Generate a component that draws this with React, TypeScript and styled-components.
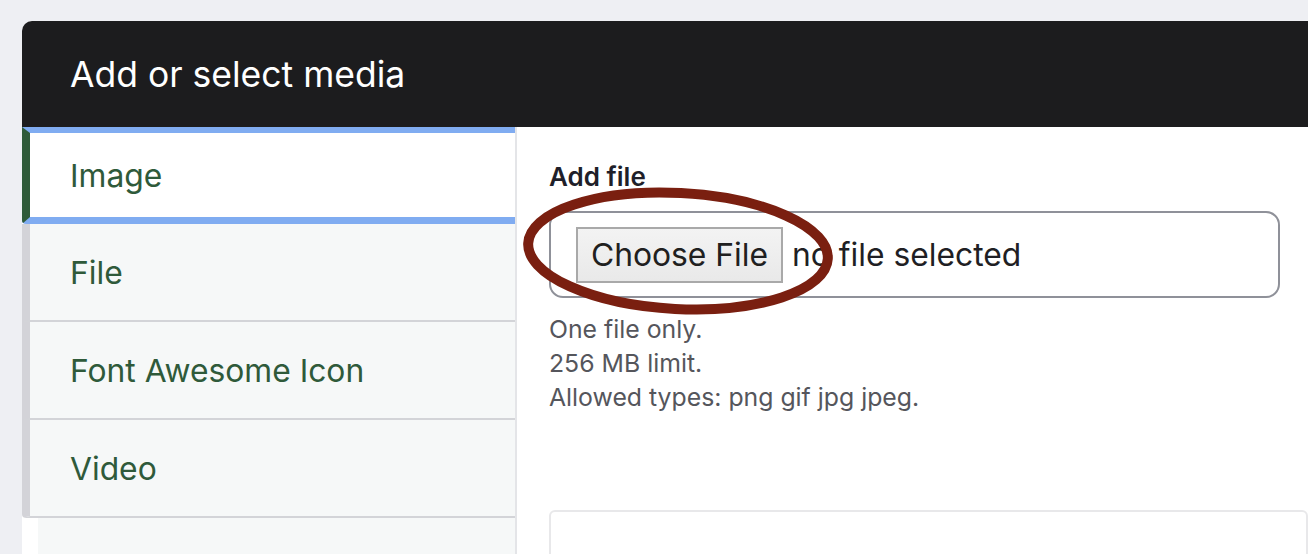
import styled, { createGlobalStyle } from 'styled-components';

const GlobalStyle = createGlobalStyle`
  html, body {
    margin: 0;
    padding: 0;
    background: #eeeff3;
    font-family: Inter, "Noto Sans", sans-serif;
    overflow: hidden;
  }
`;

const Page = styled.div`
  padding: 21px 0 0 22px;
  height: 554px;
  box-sizing: border-box;
`;

const Dialog = styled.div`
  background: #ffffff;
  border-top-left-radius: 10px;
  overflow: hidden;
  height: 100%;
`;

const Header = styled.div`
  height: 106px;
  background: #1c1c1e;
  display: flex;
  align-items: center;
  padding-left: 48px;
`;

const Title = styled.h1`
  margin: 0;
  color: #ffffff;
  font-size: 35.5px;
  font-weight: 400;
`;

const Body = styled.div`
  display: flex;
  height: 100%;
`;

const Sidebar = styled.div`
  width: 493px;
  flex: none;
  display: flex;
  flex-direction: column;
  border-right: 2px solid #e4e5e8;
`;

const TabList = styled.div`
  display: flex;
  flex-direction: column;
`;

const Tab = styled.div<{ $active?: boolean }>`
  display: flex;
  align-items: center;
  box-sizing: border-box;
  padding-left: 40px;
  font-size: 31.8px;
  color: #2f5a3a;
  border-left: 8px solid ${(p) => (p.$active ? '#2f5b39' : '#d3d3d8')};
  background: ${(p) => (p.$active ? '#ffffff' : '#f6f8f8')};
  height: ${(p) => (p.$active ? '97px' : '98px')};
  border-top: ${(p) => (p.$active ? '6px solid #80acf1' : 'none')};
  border-bottom: ${(p) => (p.$active ? '7px solid #80acf1' : '2px solid #d3d4d8')};
  border-bottom-left-radius: ${(p) => (p.$active ? '4px' : '0')};

  &:last-child {
    border-bottom-left-radius: 4px;
  }
`;

const SidebarRest = styled.div`
  flex: 1;
  margin-left: 16px;
  background: #f6f8f8;
`;

const Content = styled.div`
  flex: 1;
  padding: 34px 0 0 32px;
`;

const Label = styled.div`
  font-size: 26px;
  font-weight: 600;
  color: #1f1f2a;
  margin-bottom: 19px;
`;

const FileField = styled.div`
  position: relative;
  width: 731px;
  height: 87px;
  box-sizing: border-box;
  border: 2px solid #8f9199;
  border-radius: 14px;
  display: flex;
  align-items: center;
  padding-left: 25px;
  gap: 9px;
  font-size: 31.8px;
  color: #1f1f24;
`;

const ChooseButton = styled.span`
  display: inline-flex;
  align-items: center;
  justify-content: center;
  width: 207px;
  height: 56px;
  box-sizing: border-box;
  border: 2px solid #a9a9a9;
  background: linear-gradient(#f3f3f3, #e9e9e9);
  color: #202020;
`;

const Circle = styled.svg`
  position: absolute;
  left: -36px;
  top: -36px;
  pointer-events: none;
`;

const Help = styled.div`
  margin-top: 14px;
  font-size: 24.8px;
  line-height: 34px;
  color: #55565c;
`;

const Preview = styled.div`
  margin-top: 96px;
  height: 80px;
  border: 2px solid #e8e8ea;
  border-radius: 6px;
`;

const tabs = ['Image', 'File', 'Font Awesome Icon', 'Video'];

export default function App() {
  return (
    <>
      <GlobalStyle />
      <Page>
        <Dialog>
          <Header>
            <Title>Add or select media</Title>
          </Header>
          <Body>
            <Sidebar>
              <TabList>
                {tabs.map((t, i) => (
                  <Tab key={t} $active={i === 0}>
                    {t}
                  </Tab>
                ))}
              </TabList>
              <SidebarRest />
            </Sidebar>
            <Content>
              <Label>Add file</Label>
              <FileField>
                <ChooseButton>Choose File</ChooseButton>
                <span>no file selected</span>
                <Circle width="330" height="150" viewBox="0 0 330 150">
                  <ellipse
                    cx="163"
                    cy="74"
                    rx="150"
                    ry="58"
                    fill="none"
                    stroke="#7a1f10"
                    strokeWidth="10"
                    transform="rotate(3 163 74)"
                  />
                </Circle>
              </FileField>
              <Help>
                One file only.
                <br />
                256 MB limit.
                <br />
                Allowed types: png gif jpg jpeg.
              </Help>
              <Preview />
            </Content>
          </Body>
        </Dialog>
      </Page>
    </>
  );
}
